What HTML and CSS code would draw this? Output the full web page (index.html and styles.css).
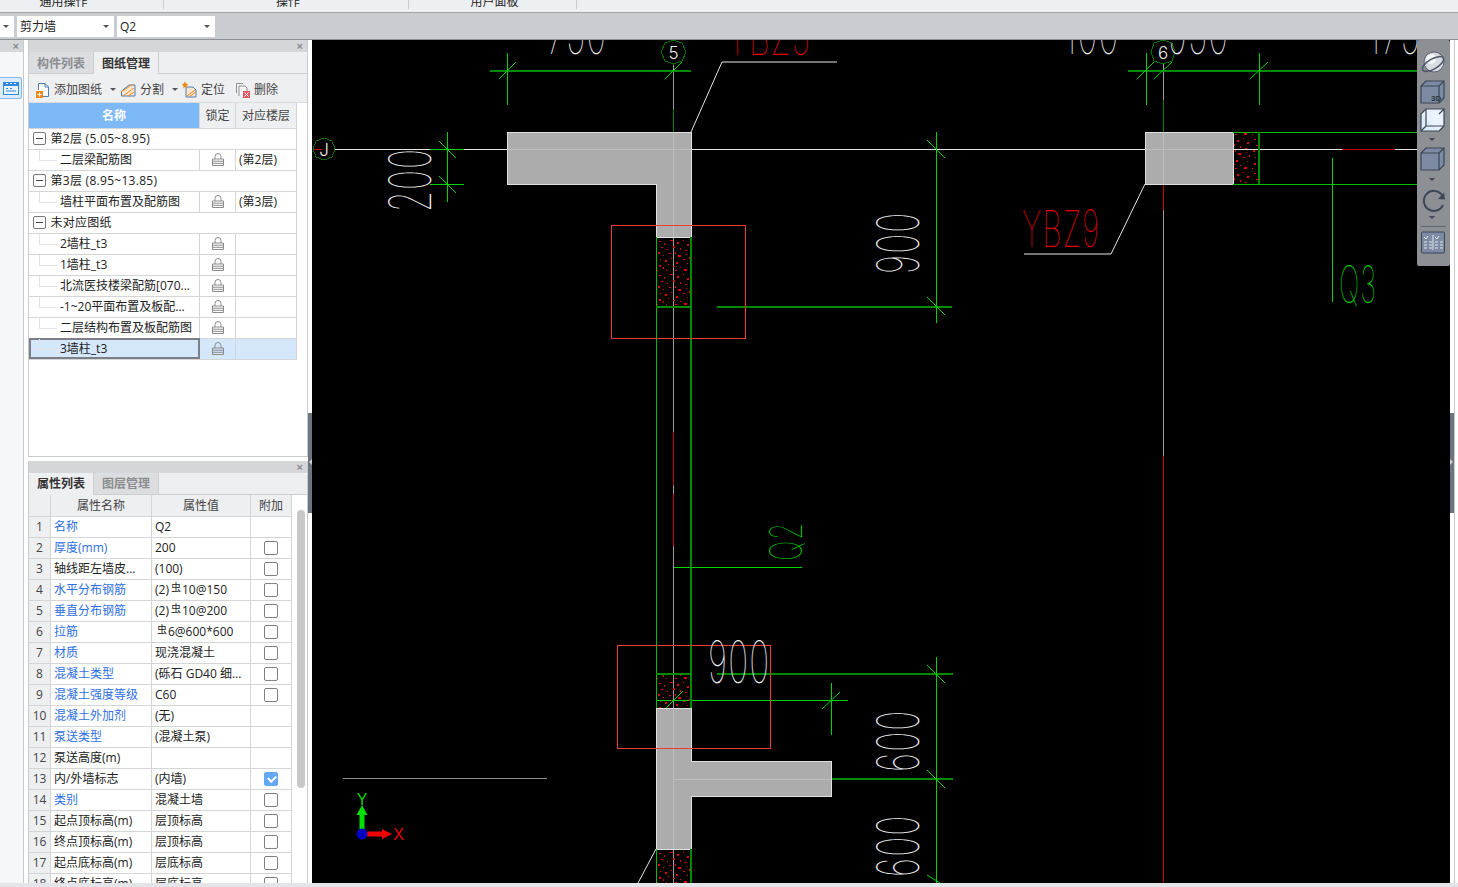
FILE: index.html
```html
<!DOCTYPE html>
<html lang="zh">
<head>
<meta charset="utf-8">
<title>图纸管理</title>
<link rel="stylesheet" href="styles.css">
</head>
<body>
<svg class="defs" width="0" height="0" aria-hidden="true">
  <symbol id="lock" viewBox="0 0 12 13">
    <path class="lock-s" d="M3 6V3.500a3 3 0 0 1 6 0V6"/>
    <path class="lock-s" d="M.5 6h11v6.500H.5zM.5 8.200h11M.5 10.300h11"/>
  </symbol>
</svg>
<header class="ribbon">
  <div class="rib-group rib-a"><span>通用操作</span></div>
  <div class="rib-group rib-b"><span>操作</span></div>
  <div class="rib-group rib-c"><span>用户面板</span></div>
</header>
<div class="selbar">
  <div class="sel sel-a"><i class="caret"></i></div>
  <div class="sel sel-b"><span>剪力墙</span><i class="caret"></i></div>
  <div class="sel sel-c"><span>Q2</span><i class="caret"></i></div>
</div>
<main class="main">
  <aside class="rail">
    <div class="rail-head"><span class="close">×</span></div>
    <div class="rail-btn">
      <svg width="16" height="13" viewBox="0 0 16 13"><rect width="16" height="13" fill="#2c8ae0"/><rect x="1" y="4" width="14" height="8" fill="#e8f3fd"/><path d="M3 1.500h2M7 1.500h2M11 1.500h2" stroke="#fff"/><path d="M3 6.500h2M7 6.500h2M3 9h10" stroke="#2c8ae0"/></svg>
    </div>
  </aside>
  <section class="side">
    <div class="panel panel-top">
      <div class="phead"><span class="close">×</span></div>
      <div class="tabs">
        <div class="tab tab-off">构件列表</div>
        <div class="tab tab-on">图纸管理</div>
      </div>
      <div class="tools">
        <div class="tool tool-add">
          <svg width="16" height="16" viewBox="0 0 16 16"><path d="M3.500 8V1.500H10L13.500 5V14.500H8" fill="#fff" stroke="#4a7fb5"/><path d="M10 1.500V5H13.500" fill="none" stroke="#4a7fb5"/><rect x="1" y="9" width="7" height="7" fill="#ee8a1d"/><path d="M4.500 10.500v4M2.500 12.500h4" stroke="#fff"/></svg>
          <span>添加图纸</span><i class="caret dark"></i>
        </div>
        <div class="tool tool-split">
          <svg width="17" height="16" viewBox="0 0 17 16"><path d="M1.500 14V9L9 3l6 0v11z" fill="#fbe5cf" stroke="#4a7fb5"/><path d="M1 10L13 2M3 14l11-8M8 14l6-4" stroke="#ee8a1d" fill="none"/></svg>
          <span>分割</span><i class="caret dark"></i>
        </div>
        <div class="tool tool-loc">
          <svg width="16" height="17" viewBox="0 0 16 17"><path d="M4 6h7l3 3v7H4z" fill="#fbe5cf" stroke="#4a7fb5"/><path d="M5 15l8-6M8 15l6-4" stroke="#ee8a1d"/><path d="M3 0l1 2.500 2.500.5L4.500 5 5 7.500 3 6 1 7.500 1.500 5-.5 3 2 2.500z" fill="#ee8a1d"/></svg>
          <span>定位</span>
        </div>
        <div class="tool tool-del">
          <svg width="16" height="16" viewBox="0 0 16 16"><path d="M1.500 11V1.500H8M4 14V4h6l2 2v3" fill="#f4f4f4" stroke="#8a8f96"/><rect x="8" y="9" width="7" height="7" fill="#e0575f"/><path d="M9.500 10.500l4 4M13.500 10.500l-4 4" stroke="#fff"/></svg>
          <span>删除</span>
        </div>
      </div>
      <table class="grid tree">
        <colgroup><col class="c-name"><col class="c-lock"><col class="c-floor"></colgroup>
        <thead><tr><th class="th-sel">名称</th><th>锁定</th><th>对应楼层</th></tr></thead>
        <tbody>
          <tr class="grp"><td colspan="3"><i class="expander"></i><span class="grp-t">第2层 (5.05~8.95)</span></td></tr>
          <tr><td class="leaf">二层梁配筋图</td><td class="lk"><svg class="lki"><use href="#lock"/></svg></td><td>(第2层)</td></tr>
          <tr class="grp"><td colspan="3"><i class="expander"></i><span class="grp-t">第3层 (8.95~13.85)</span></td></tr>
          <tr><td class="leaf">墙柱平面布置及配筋图</td><td class="lk"><svg class="lki"><use href="#lock"/></svg></td><td>(第3层)</td></tr>
          <tr class="grp"><td colspan="3"><i class="expander"></i><span class="grp-t">未对应图纸</span></td></tr>
          <tr><td class="leaf">2墙柱_t3</td><td class="lk"><svg class="lki"><use href="#lock"/></svg></td><td></td></tr>
          <tr><td class="leaf">1墙柱_t3</td><td class="lk"><svg class="lki"><use href="#lock"/></svg></td><td></td></tr>
          <tr><td class="leaf">北流医技楼梁配筋[070...</td><td class="lk"><svg class="lki"><use href="#lock"/></svg></td><td></td></tr>
          <tr><td class="leaf">-1~20平面布置及板配...</td><td class="lk"><svg class="lki"><use href="#lock"/></svg></td><td></td></tr>
          <tr><td class="leaf">二层结构布置及板配筋图</td><td class="lk"><svg class="lki"><use href="#lock"/></svg></td><td></td></tr>
          <tr class="sel-row"><td class="leaf cur">3墙柱_t3</td><td class="lk"><svg class="lki"><use href="#lock"/></svg></td><td></td></tr>
        </tbody>
      </table>
    </div>
    <div class="panel panel-bot">
      <div class="phead"><span class="close">×</span></div>
      <div class="tabs">
        <div class="tab tab-on tab-first">属性列表</div>
        <div class="tab tab-off">图层管理</div>
      </div>
      <div class="prop-wrap">
        <table class="grid props">
          <colgroup><col class="p-n"><col class="p-name"><col class="p-val"><col class="p-add"></colgroup>
          <thead><tr><th></th><th>属性名称</th><th>属性值</th><th>附加</th></tr></thead>
          <tbody>
            <tr><td class="n">1</td><td class="bl">名称</td><td>Q2</td><td></td></tr>
            <tr><td class="n">2</td><td class="bl">厚度(mm)</td><td>200</td><td><i class="cb"></i></td></tr>
            <tr><td class="n">3</td><td>轴线距左墙皮...</td><td>(100)</td><td><i class="cb"></i></td></tr>
            <tr><td class="n">4</td><td class="bl">水平分布钢筋</td><td>(2)<span class="bar">虫</span>10@150</td><td><i class="cb"></i></td></tr>
            <tr><td class="n">5</td><td class="bl">垂直分布钢筋</td><td>(2)<span class="bar">虫</span>10@200</td><td><i class="cb"></i></td></tr>
            <tr><td class="n">6</td><td class="bl">拉筋</td><td><span class="bar">虫</span>6@600*600</td><td><i class="cb"></i></td></tr>
            <tr><td class="n">7</td><td class="bl">材质</td><td>现浇混凝土</td><td><i class="cb"></i></td></tr>
            <tr><td class="n">8</td><td class="bl">混凝土类型</td><td>(砾石 GD40 细...</td><td><i class="cb"></i></td></tr>
            <tr><td class="n">9</td><td class="bl">混凝土强度等级</td><td>C60</td><td><i class="cb"></i></td></tr>
            <tr><td class="n">10</td><td class="bl">混凝土外加剂</td><td>(无)</td><td></td></tr>
            <tr><td class="n">11</td><td class="bl">泵送类型</td><td>(混凝土泵)</td><td></td></tr>
            <tr><td class="n">12</td><td>泵送高度(m)</td><td></td><td></td></tr>
            <tr><td class="n">13</td><td>内/外墙标志</td><td>(内墙)</td><td><i class="cb on"></i></td></tr>
            <tr><td class="n">14</td><td class="bl">类别</td><td>混凝土墙</td><td><i class="cb"></i></td></tr>
            <tr><td class="n">15</td><td>起点顶标高(m)</td><td>层顶标高</td><td><i class="cb"></i></td></tr>
            <tr><td class="n">16</td><td>终点顶标高(m)</td><td>层顶标高</td><td><i class="cb"></i></td></tr>
            <tr><td class="n">17</td><td>起点底标高(m)</td><td>层底标高</td><td><i class="cb"></i></td></tr>
            <tr><td class="n">18</td><td>终点底标高(m)</td><td>层底标高</td><td><i class="cb"></i></td></tr>
          </tbody>
        </table>
        <div class="scroll"></div>
      </div>
    </div>
  </section>
  <div class="gutter"><span class="handle"><i class="tri tri-l"></i></span></div>
  <div class="canvas">
    <svg class="cad" viewBox="312 40 1138 843" width="1138" height="843" shape-rendering="crispEdges">
      <defs>
        <pattern id="hatch" width="35" height="34" patternUnits="userSpaceOnUse" x="656" y="238">
          <path class="dots" d="M3 3h2v1H3zM8 5h1v2H8zM14 2h3v1h-3zM21 4h2v2h-2zM27 2h1v1h-1zM31 6h2v2h-2zM5 9h2v1H5zM11 11h1v1h-1zM17 8h2v2h-2zM24 10h1v2h-1zM29 12h2v1h-2zM2 14h2v2H2zM7 17h1v1H7zM13 15h2v1h-2zM19 14h1v2h-1zM22 17h3v2h-3zM30 16h1v1h-1zM33 19h1v2h-1zM4 21h1v1H4zM9 22h2v2H9zM15 20h1v1h-1zM20 24h2v2h-2zM27 21h2v1h-2zM31 25h1v1h-1zM3 27h2v2H3zM7 29h1v2H7zM12 26h1v1h-1zM17 28h2v1h-2zM24 29h1v1h-1zM28 31h3v2h-3zM10 32h1v1h-1zM19 32h2v1h-2zM1 32h1v1H1z"/>
        </pattern>
      </defs>

      <!-- drawing axes -->
      <path class="ln-w" d="M335 149.500H1342M1395 149.500H1420"/>
      <path class="ln-r" d="M1342 149.500H1395M313 149.500H322M1163.500 184V210M1163.500 456V883M673.500 432V485M673.500 494V546"/>
      <path class="ln-gy" d="M673.500 64V109M1163.500 64V100M1163.500 210V456M673.500 238V432M673.500 485V494M673.500 546V883"/>
      <path class="ln-dg" d="M673.500 109V132M1163.500 100V132"/>
      <polygon class="bub" points="324,138 332,141 335,149 332,157 324,160 316,157 313,149 316,141"/>
      <polygon class="bub" points="673.500,40 682,43 686,52 682,61 673.500,64 665,61 661,52 665,43"/>
      <polygon class="bub" points="1163,40 1172,43 1175,52 1172,61 1163,64 1154,61 1151,52 1154,43"/>
      <text class="cad-t t-w bub-t" x="324" y="156">J</text>
      <text class="cad-t t-w bub-t" x="673.500" y="59">5</text>
      <text class="cad-t t-w bub-t" x="1163" y="59">6</text>

      <!-- dimension lines -->
      <path class="ln-dg2" d="M490 71H691M1128 71H1420M717 306.500H952M717 673.500H953M831 779H953"/>
      <path class="ln-b" d="M507.500 53V105M1146 53V105M1259.500 53V105M447.500 132V202M430 149.500H464M430 184.500H464M1332.500 158V302M656 700.500H746M746 700.500H848M936 132V323M936 657V883M831.500 683V735M717 883H953M674 567.500H802"/>
      <path class="ln-b" d="M499 79L516 62M665 79L682 62M1137 79L1154 62M1154 79L1172 62M1250 79L1268 62M439 141L456 158M439 176L456 193M927 140L945 158M927 297L945 315M927 665L945 683M927 770L945 788M927 875L940 883M822 709L840 692M666 708L683 691" shape-rendering="auto"/>

      <!-- walls -->
      <path class="wall" d="M507.500 132.500H691.500V237.500H656.500V184.500H507.500Z"/>
      <rect class="wall" x="1145.500" y="132.500" width="88" height="52"/>
      <path class="wall" d="M656 708.500H691.500V761.500H831.500V796.500H691.500V849H656Z"/>
      <path class="ln-faint" d="M673.500 132V237M1163.500 132V184M673.500 708V849M674 779H831M507 149.500H691M1145 149.500H1233"/>

      <!-- concrete -->
      <rect class="hatch" x="657" y="238" width="34" height="68"/>
      <rect class="hatch" x="1234" y="133" width="25" height="51"/>
      <rect class="hatch" x="657" y="674" width="34" height="34"/>
      <rect class="hatch" x="657" y="849" width="34" height="34"/>
      <path class="ln-b2" d="M656.500 237V708M656.500 849V883M1233 132.500H1420M1233 184.500H1420"/>
      <path class="ln-dg2" d="M691 237V708M691 849V883M656 306.500H691M656 674H691M1259 132V184"/>

      <!-- leaders -->
      <path class="ln-w" d="M691 132L722 62H837M1145 184L1111 254H1024M656 849L638 883" shape-rendering="auto"/>
      <path class="ln-gy2" d="M343 778.500H547"/>

      <!-- red frames -->
      <rect class="frame" x="611.500" y="225.500" width="134" height="113"/>
      <rect class="frame" x="617.500" y="645.500" width="153" height="103"/>

      <!-- drawing text -->
      <text class="cad-t t-w" transform="translate(547 54) scale(.58 1)" >750</text>
      <text class="cad-t t-w" transform="translate(1064 54) scale(.58 1)">100</text>
      <text class="cad-t t-w" transform="translate(1168 54) scale(.58 1)">950</text>
      <text class="cad-t t-w" transform="translate(1368 54) scale(.58 1)">175</text>
      <text class="cad-t t-w" transform="translate(708 683) scale(.58 1)">900</text>
      <text class="cad-t t-w" transform="translate(431 212) rotate(-90) scale(.58 1)">200</text>
      <text class="cad-t t-w" transform="translate(919 274) rotate(-90) scale(.58 1)">900</text>
      <text class="cad-t t-w" transform="translate(919 772) rotate(-90) scale(.58 1)">600</text>
      <text class="cad-t t-w" transform="translate(919 877) rotate(-90) scale(.58 1)">600</text>
      <text class="cad-t t-r" transform="translate(727 55) scale(.56 .88)">YBZ5</text>
      <text class="cad-t t-r" transform="translate(1022 247) scale(.52 .88)">YBZ9</text>
      <text class="cad-t t-g" transform="translate(1339 303) scale(.47 .88)">Q3</text>
      <text class="cad-t t-g" transform="translate(802 561) rotate(-90) scale(.47 .78)">Q2</text>

      <!-- coordinate axes -->
      <g shape-rendering="auto">
        <path class="ax-g" d="M359.500 830V815H356.500L362 805L367.500 815H364.500V830Z"/>
        <path class="ax-r" d="M366 831.500H382V829L392 834L382 839V836.500H366Z"/>
        <circle class="ax-b" cx="362" cy="834" r="5.500"/>
        <text class="ax-l ax-ly" x="362" y="805">Y</text>
        <text class="ax-l ax-lx" x="398.500" y="840">X</text>
      </g>
    </svg>
    <div class="nav">
      <svg width="33" height="226" viewBox="0 0 33 226">
        <ellipse cx="17" cy="22" rx="10" ry="10" fill="#d8dce2" stroke="#5b6473"/>
        <ellipse cx="14" cy="19" rx="5" ry="5" fill="#f6f8fa"/>
        <ellipse cx="16" cy="24" rx="12" ry="5" transform="rotate(-30 16 24)" fill="none" stroke="#4c5564" stroke-width="1.500"/>
        <g fill="#7c8ba3" stroke="#3c4655" stroke-width="1.200">
          <path d="M4 46h18v17H4zM4 46l5-5h18v17l-5 5M22 46l5-5"/>
          <path d="M4 74h18v17H4z" fill="#dcecfb"/>
          <path d="M4 74l5-5h18v17l-5 5M22 74l5-5" fill="#eaf3fc"/>
          <path d="M9 69v17h18M9 86l-5 5" fill="none"/>
          <path d="M4 113h18v17H4zM4 113l5-5h18v17l-5 5M22 113l5-5"/>
        </g>
        <path d="M12 98h6l-3 3zM12 138h6l-3 3zM12 176h6l-3 3z" fill="#3c4655"/>
        <path d="M25 155a10 10 0 1 0 1 10" fill="none" stroke="#3c4655" stroke-width="2"/>
        <path d="M21 159l7 .5-1-7z" fill="#3c4655"/>
        <path d="M4 186.500h25" stroke="#5f6670"/>
        <g fill="#7c8ba3" stroke="#3c4655">
          <rect x="4.500" y="192" width="23" height="21" rx="1"/>
        </g>
        <path d="M7 197l2 2 2-3M18 197l2 2 2-3M7 202h3M12 202h3M18 202h3M23 202h3M7 205h3M12 205h3M18 205h3M23 205h3M7 208h3M12 208h3M18 208h3M23 208h3M16 195v15" fill="none" stroke="#e4e8ee"/>
        <text class="t3d" x="14" y="61">3D</text>
      </svg>
    </div>
  </div>
  <div class="edge"><span class="handle"><i class="tri tri-r"></i></span></div>
</main>
<footer class="foot"></footer>
</body>
</html>
```
FILE: styles.css
```css
* { box-sizing: border-box; }
html, body { margin: 0; height: 887px; overflow: hidden; }
body {
  display: flex;
  flex-direction: column;
  font: 12px/1 "Open Sans", "Noto Sans CJK SC", sans-serif;
  color: #222;
  background: #fff;
}
.defs { position: absolute; }

/* ribbon */
.ribbon {
  height: 13px;
  flex: none;
  display: flex;
  background: #edf0f2;
  border-bottom: 1px solid #a3a5a8;
  overflow: hidden;
}
.rib-group {
  display: flex;
  justify-content: center;
  border-right: 1px solid #c9cccf;
  height: 9px;
  overflow: hidden;
}
.rib-group span { margin-top: -6px; line-height: 16px; color: #222; }
.rib-a { width: 164px; padding-right: 36px; }
.rib-b { width: 245px; padding-left: 4px; }
.rib-c { width: 168px; padding-left: 4px; }

/* select bar */
.selbar {
  height: 27px;
  flex: none;
  display: flex;
  gap: 3px;
  padding: 3px 0 2px;
  background: #c9ccd1;
  border-bottom: 1px solid #8e9094;
}
.sel {
  background: #fff;
  display: flex;
  align-items: center;
  justify-content: space-between;
  padding: 0 5px 0 3px;
  font-size: 12px;
}
.sel-a { width: 14px; padding: 0 3px; }
.sel-b { width: 97px; }
.sel-c { width: 98px; }
.caret {
  display: inline-block;
  width: 0;
  height: 0;
  border: 3px solid transparent;
  border-top: 3px solid #555;
  border-bottom: 0;
}
.caret.dark { margin-left: 5px; }

/* layout */
.main { flex: 1; display: flex; min-height: 0; }
.foot { height: 4px; flex: none; background: #e3e5e8; }

.rail {
  width: 24px;
  flex: none;
  background: #f6f7f8;
  border-right: 1px solid #c8cacd;
}
.rail-head {
  height: 12px;
  background: #d4d6da;
  display: flex;
  justify-content: flex-end;
  padding-right: 4px;
}
.close { color: #8a8d92; font: bold 11px/12px "Liberation Sans", sans-serif; }
.rail-btn {
  margin-top: 25px;
  width: 22px;
  height: 22px;
  background: #dcecfb;
  border: 1px solid #7db8f0;
  border-left: 0;
  border-radius: 0 3px 3px 0;
  display: flex;
  align-items: center;
  justify-content: center;
}
.side {
  width: 280px;
  flex: none;
  margin-left: 4px;
  display: flex;
  flex-direction: column;
  gap: 4px;
}
.panel {
  border: 1px solid #c8cacd;
  border-width: 0 1px 0 1px;
  background: #fff;
  display: flex;
  flex-direction: column;
}
.panel-top { height: 417px; border-bottom-width: 1px; overflow: hidden; }
.panel-bot { flex: 1; min-height: 0; overflow: hidden; }
.phead {
  height: 12px;
  flex: none;
  background: #d4d6da;
  display: flex;
  justify-content: flex-end;
  padding-right: 4px;
}
.tabs {
  height: 22px;
  flex: none;
  display: flex;
  background: #eeeff1;
  border-bottom: 1px solid #ccced1;
}
.tab {
  width: 65px;
  display: flex;
  align-items: center;
  justify-content: center;
  font-weight: 700;
  border-right: 1px solid #ccced1;
}
.panel-top .tab { padding-top: 2px; }
.tab-off { background: #dcdde0; color: #8b8d90; }
.tab-on { background: #eeeff1; color: #333; height: 22px; }
.tools {
  height: 29px;
  flex: none;
  display: flex;
  align-items: center;
  background: #eeeff1;
  border-bottom: 1px solid #dadbdd;
  padding: 3px 0 0 6px;
  color: #444;
}
.tool { display: flex; align-items: center; gap: 3px; }
.tool-add { width: 85px; }
.tool-split { width: 62px; }
.tool-loc { width: 53px; }

/* tables */
.grid {
  border-collapse: collapse;
  table-layout: fixed;
  font-size: 12px;
  margin-left: -1px;
}
.grid th {
  height: 25px;
  font-weight: 400;
  background: #eeeff1;
  color: #444;
  border: 1px solid #d4d5d7;
  border-top: 0;
  padding: 2px 0 0;
}
.grid td {
  height: 21px;
  padding: 0 3px;
  border: 1px solid #d4d5d7;
  white-space: nowrap;
  overflow: hidden;
  color: #222;
}
.tree { width: 268px; }
.c-name { width: 171px; }
.c-lock { width: 36px; }
.c-floor { width: 61px; }
.th-sel.th-sel { background: #7db8f7; color: #fff; font-weight: 700; }
.grid .grp td { border-left: 0; padding-left: 4px; }
.expander {
  display: inline-block;
  width: 13px;
  height: 13px;
  border: 1px solid #777;
  border-radius: 2px;
  vertical-align: middle;
  position: relative;
  background: #fff;
}
.expander::after {
  content: "";
  position: absolute;
  left: 2px;
  right: 2px;
  top: 5px;
  height: 1px;
  background: #444;
}
.grp-t { margin-left: 5px; vertical-align: middle; letter-spacing: .28px; }
.leaf { position: relative; }
.grid .leaf { padding-left: 31px; }
.leaf::before {
  content: "";
  position: absolute;
  left: 10px;
  top: 0;
  width: 17px;
  height: 10px;
  border-left: 1px solid #e3e3e3;
  border-bottom: 1px solid #e3e3e3;
}
.lk { text-align: center; }
.lki { width: 12px; height: 13px; display: block; margin: 0 auto; }
.lock-s { fill: none; stroke: #8b8b8b; stroke-width: 1; }
.sel-row td { background: #d4e7fb; }
.grid .cur { background: #d4e7fb; outline: 2px solid #7c8086; outline-offset: -2px; }

.prop-wrap { flex: 1; min-height: 0; display: flex; overflow: hidden; background: #fff; }
.props { width: 263px; flex: none; align-self: flex-start; }
.props th { height: 21px; padding: 1px 0 0; }
.p-n { width: 22px; }
.p-name { width: 101px; }
.p-val { width: 99px; }
.p-add { width: 41px; }
.grid .n { background: #eeeff1; text-align: center; padding: 0; color: #444; }
.grid .bl { color: #2f6fe4; }
.bar { font-size: 10px; position: relative; top: -3px; margin: 0 1px 0 2px; }
.cb {
  display: block;
  width: 14px;
  height: 14px;
  margin: 0 auto;
  border: 1px solid #7f7f7f;
  border-radius: 2px;
  background: #fff;
}
.cb.on {
  background: #62a8f5;
  border-color: #62a8f5;
  position: relative;
}
.cb.on::after {
  content: "";
  position: absolute;
  left: 3px;
  top: 2px;
  width: 6px;
  height: 4px;
  border-left: 2px solid #fff;
  border-bottom: 2px solid #fff;
  transform: rotate(-45deg);
}
.scroll {
  width: 8px;
  height: 278px;
  margin: 15px 0 0 5px;
  background: #c8c8c8;
  border-radius: 4px;
}

/* gutters and handles */
.gutter, .edge { position: relative; background: #fff; flex: none; }
.gutter { width: 4px; }
.edge { width: 8px; }
.edge::after {
  content: "";
  position: absolute;
  left: 4px;
  top: 0;
  bottom: 0;
  width: 1px;
  background: #c8cacd;
}
.handle {
  position: absolute;
  left: 0;
  top: 373px;
  width: 4px;
  height: 100px;
  background: #6d7680;
}
.tri { position: absolute; top: 46px; border: 3px solid transparent; }
.tri-l { left: -2px; border-right-color: #c9ccd1; }
.tri-r { left: 0; border-left-color: #c9ccd1; }

/* CAD canvas */
.canvas { width: 1138px; flex: none; background: #000; position: relative; overflow: hidden; }
.cad { display: block; }
.cad path, .cad polygon, .cad rect { fill: none; }
.ln-w { stroke: #e6e6e6; stroke-width: 1; }
.ln-gy { stroke: #9a9a9a; stroke-width: 1; }
.ln-gy2 { stroke: #8a8a8a; stroke-width: 1; }
.ln-r { stroke: #c80000; stroke-width: 1; }
.ln-dg { stroke: #008000; stroke-width: 1; }
.ln-dg2 { stroke: #008a00; stroke-width: 2; }
.ln-b { stroke: #00d400; stroke-width: 1; }
.ln-b2 { stroke: #00c000; stroke-width: 1; }
.cad .bub { stroke: #007000; stroke-width: 1; }
.cad .wall { fill: #acacac; stroke: #e0e0e0; stroke-width: 1; }
.ln-faint { stroke: #bdbdbd; stroke-width: 1; }
.cad .hatch { fill: url(#hatch); }
.cad .dots { fill: #e80000; }
.cad .frame { stroke: #f03a3a; stroke-width: 1; }
.cad-t {
  font-family: Inter, Roboto, sans-serif;
  font-weight: 100;
  font-size: 58px;
  letter-spacing: 2px;
}
.t-w { fill: #f0f0f0; }
.t-r { fill: #e00000; }
.t-g { fill: #00c800; }
.bub-t { font-size: 17px; font-weight: 300; text-anchor: middle; letter-spacing: 0; }
.cad .ax-g { fill: #00e000; }
.cad .ax-r { fill: #f00000; }
.ax-b { fill: #0000c0; }
.ax-l { font: 400 16px "Liberation Sans", sans-serif; text-anchor: middle; }
.ax-ly { fill: #00d800; }
.ax-lx { fill: #f00000; }
.nav {
  position: absolute;
  right: 0;
  top: 0;
  width: 33px;
  height: 226px;
  background: #8c8f94;
  border-radius: 2px;
}
.nav svg { display: block; }
.t3d { font: 700 8px "Liberation Sans", sans-serif; fill: #2e3744; }
```
